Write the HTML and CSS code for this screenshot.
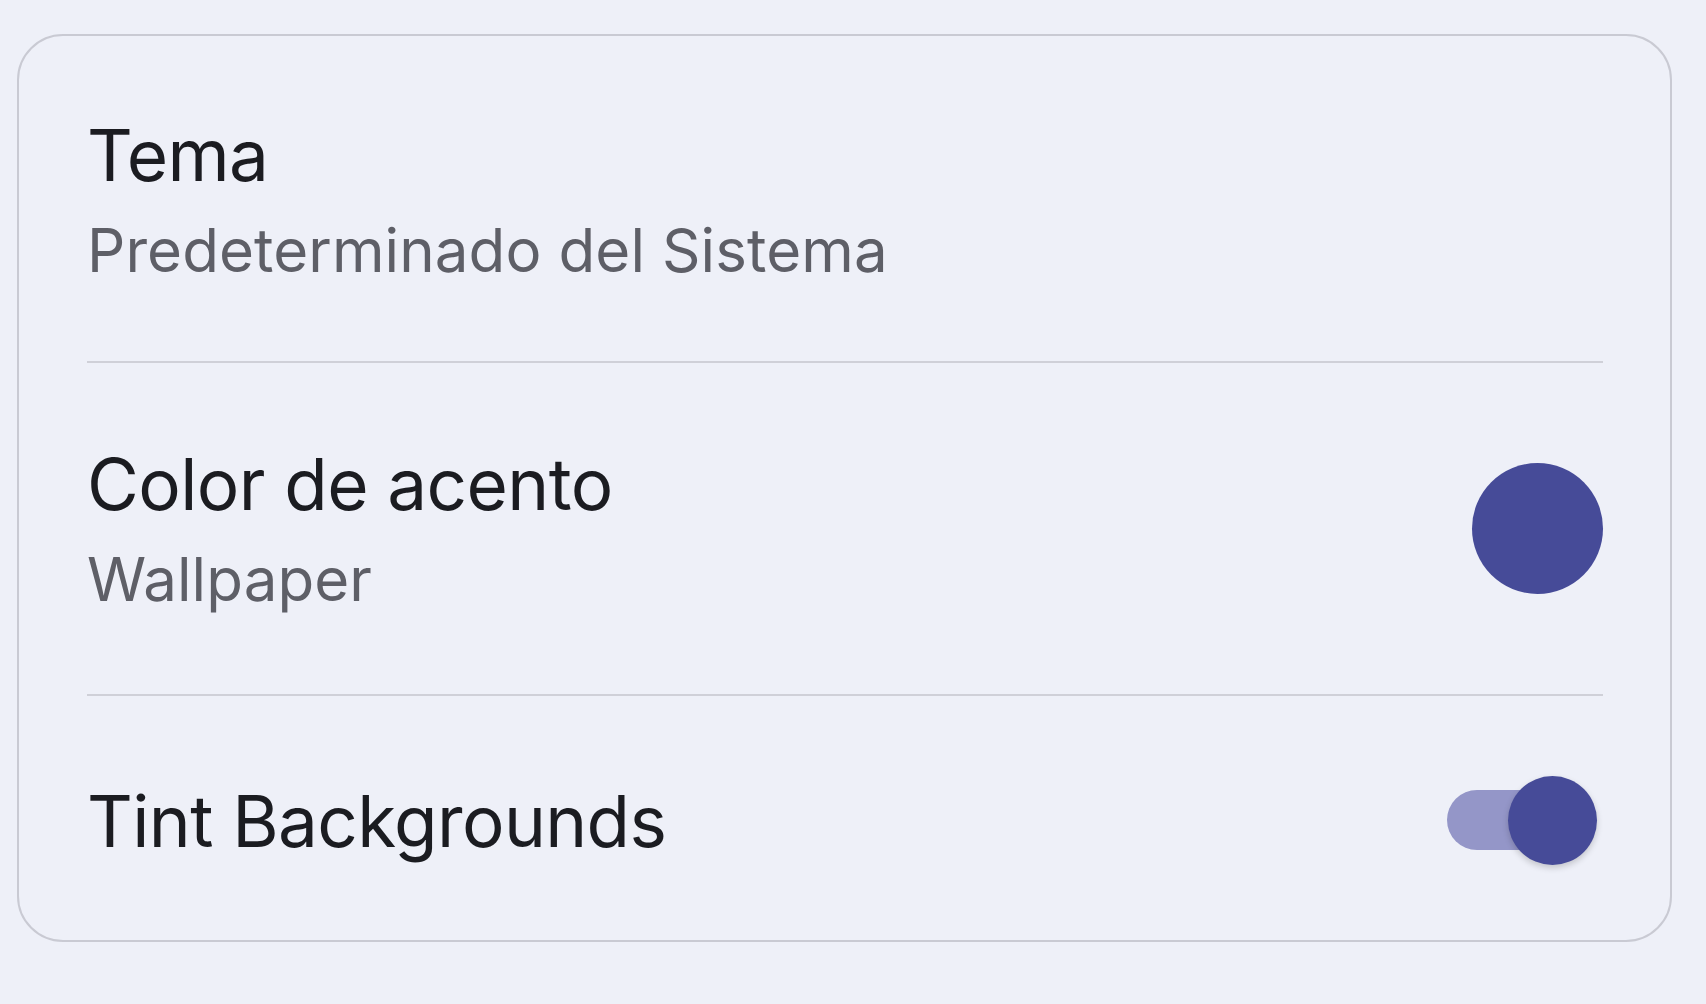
FILE: index.html
```html
<!DOCTYPE html>
<html lang="es">
<head>
<meta charset="UTF-8" />
<meta name="viewport" content="width=device-width, initial-scale=1.0"/>
<title>Ajustes</title>
<link rel="stylesheet" href="styles.css">
</head>
<body>
<main class="page">
  <section class="card">
    <!-- Tema -->
    <div class="row row-first">
      <div class="row-text">
        <div class="row-title">Tema</div>
        <div class="row-sub">Predeterminado del Sistema</div>
      </div>
    </div>
    <div class="divider"></div>

    <!-- Color de acento -->
    <div class="row">
      <div class="row-text">
        <div class="row-title">Color de acento</div>
        <div class="row-sub">Wallpaper</div>
      </div>
      <div class="swatch"></div>
    </div>
    <div class="divider"></div>

    <!-- Tint -->
    <div class="row row-last">
      <div class="row-text">
        <div class="row-title">Tint Backgrounds</div>
      </div>
      <div class="switch">
        <div class="switch-track"></div>
        <div class="switch-thumb"></div>
      </div>
    </div>
  </section>
</main>
</body>
</html>
```

FILE: styles.css
```css
body {
  margin: 0;
  font-family: Inter, "Noto Sans", sans-serif;
  background: #eef0f8;
}
.page {
  padding: 34px 34px 0 17px;
}
.card {
  border: 2px solid #c9cad3;
  border-radius: 46px;
  padding: 0 67px 0 68px;
}
.row {
  display: flex;
  align-items: center;
  justify-content: space-between;
  padding: 78px 0 79px;
}
.row-first {
  padding: 76px 0 75px;
}
.row-last {
  padding: 80px 0 75px;
}
.row-text {
  display: flex;
  flex-direction: column;
  gap: 16px;
}
.row-title {
  font-size: 71px;
  line-height: 86px;
  letter-spacing: -0.6px;
  color: #1b1c21;
}
.row-sub {
  font-size: 60px;
  line-height: 72px;
  letter-spacing: 0.1px;
  color: #5e5f67;
}
.divider {
  height: 2px;
  background: #cfd0d8;
}
.swatch {
  width: 131px;
  height: 131px;
  border-radius: 50%;
  background: #464b98;
}
/* switch, on */
.switch {
  position: relative;
  width: 156px;
  height: 89px;
}
.switch-track {
  position: absolute;
  left: 0;
  top: 14px;
  width: 137px;
  height: 60px;
  border-radius: 30px;
  background: #9496c8;
}
.switch-thumb {
  position: absolute;
  left: 61px;
  top: 0;
  width: 89px;
  height: 89px;
  border-radius: 50%;
  background: #464b98;
  box-shadow: 0 3px 6px rgba(0,0,0,0.18);
}
```
